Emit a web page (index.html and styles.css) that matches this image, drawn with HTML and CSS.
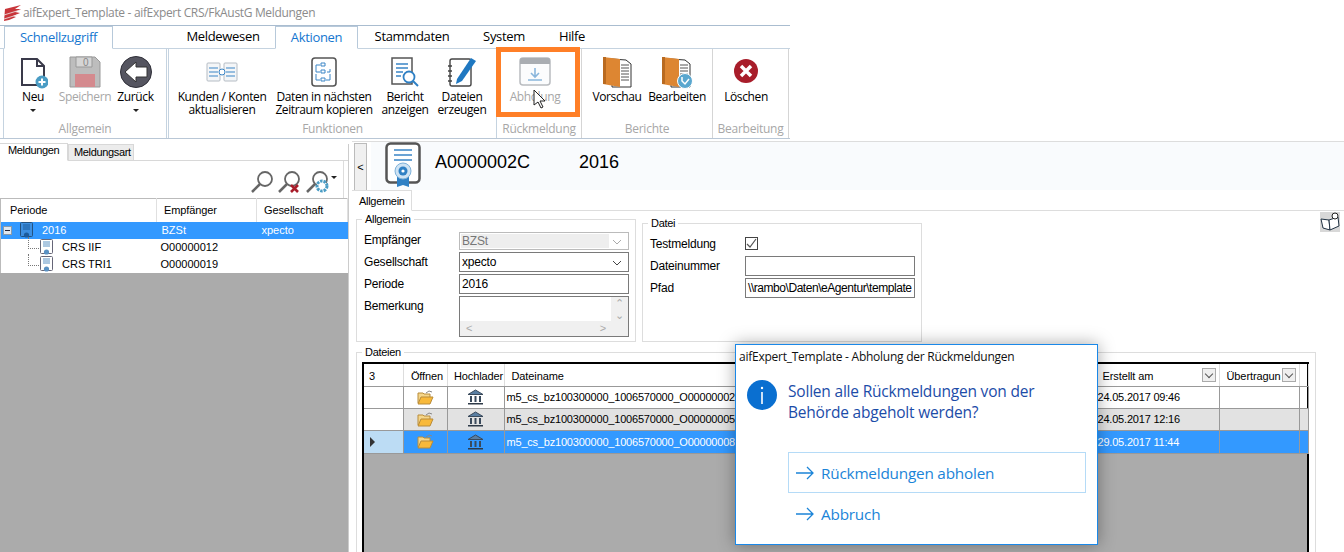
FILE: index.html
```html
<!DOCTYPE html>
<html lang="de">
<head>
<meta charset="utf-8">
<title>aifExpert CRS/FkAustG Meldungen</title>
<link rel="stylesheet" href="styles.css">
</head>
<body>
<svg class="defs" width="0" height="0">
  <symbol id="cert" viewBox="0 0 36 46">
    <rect x="1.5" y="1.5" width="33" height="39" rx="4" fill="#fff" stroke="#555" stroke-width="2.5"/>
    <path d="M9 8h18M9 13h18M9 18h18" stroke="#3a85c6" stroke-width="1.6"/>
    <path d="M12 33v12l6-2 6 2V33z" fill="#2f80c4"/>
    <circle cx="18" cy="29" r="8" fill="#cfe3f3" stroke="#7fb2da"/>
    <circle cx="18" cy="29" r="4.5" fill="#2f80c4"/>
    <circle cx="18" cy="29" r="1.6" fill="#fff"/>
  </symbol>
  <symbol id="tree" viewBox="0 0 14 17">
    <rect x=".5" y=".5" width="12" height="14" rx="1" fill="#fff" stroke="#667"/>
    <path d="M3 3h7M3 5h7M3 7h7" stroke="#5a92c4"/>
    <circle cx="6.5" cy="13" r="2.6" fill="#5a92c4"/>
  </symbol>
  <symbol id="treesel" viewBox="0 0 14 17">
    <rect x=".5" y=".5" width="12" height="14" rx="1" fill="#3d8fe0" stroke="#24527f"/>
    <path d="M3 3h7M3 5h7M3 7h7" stroke="#1d5c9c"/>
    <circle cx="6.5" cy="13" r="2.6" fill="#1d5c9c"/>
  </symbol>
  <symbol id="folder" viewBox="0 0 17 15">
    <path d="M1 3h5l1 1h6v9H1z" fill="#f5d68a" stroke="#b98c3a"/>
    <path d="M1 14l3-7h12l-3 7z" fill="#f8b93a" stroke="#b98c3a"/>
    <path d="M9 3l3-2 3 1" fill="none" stroke="#888"/>
  </symbol>
  <symbol id="bank" viewBox="0 0 17 16">
    <path d="M8.500 1L16 5.500H1z" fill="#5a7fa3" stroke="#3a4a5c"/>
    <path d="M3 7h2v6H3zM7.500 7h2v6h-2zM12 7h2v6h-2z" fill="#3a4a5c"/>
    <path d="M1 14h15v1.500H1z" fill="#2e3a48"/>
  </symbol>
  <symbol id="folderdoc" viewBox="0 0 30 32">
    <path d="M10 3l14 1 5 4v23H10z" fill="#fff" stroke="#333"/>
    <path d="M19 9h8M19 12h8M19 15h8M19 18h8M19 21h8M19 24h8" stroke="#555"/>
    <path d="M1 1l17 2v28L1 28z" fill="#dd8632"/>
    <path d="M1 1h3v27H1z" fill="#b96a20"/>
  </symbol>
</svg>

<header class="titlebar">
  <svg class="applogo" width="19" height="18" viewBox="0 0 19 18"><path d="M1 17L2 5l16-4-6 4 6 0-6 3 5 1-7 3 3 1-7 3z" fill="#c8353a"/><path d="M1 11l16-5M1 15l13-4" stroke="#eee" stroke-width=".8"/></svg>
  <span class="titletext">aifExpert_Template - aifExpert CRS/FkAustG Meldungen</span>
</header>

<section class="ribbon">
  <nav class="ribbontabs">
    <span class="rtab rtab-quick">Schnellzugriff</span>
    <span class="rtab rtab-melde">Meldewesen</span>
    <span class="rtab rtab-akt">Aktionen</span>
    <span class="rtab rtab-stamm">Stammdaten</span>
    <span class="rtab rtab-sys">System</span>
    <span class="rtab rtab-hilfe">Hilfe</span>
  </nav>
  <div class="groups">
    <div class="group g-allg">
      <div class="items">
        <div class="rbtn w-neu">
          <svg class="ico" width="30" height="32" viewBox="0 0 30 32"><path d="M4 3h15l7 7v19H4z" fill="#fff" stroke="#3a3a4a" stroke-width="2"/><path d="M19 3v7h7" fill="none" stroke="#3a3a4a" stroke-width="2"/><circle cx="24" cy="26" r="6.500" fill="#4a9cc4"/><path d="M24 22.500v7M20.500 26h7" stroke="#fff" stroke-width="2"/></svg>
          <span>Neu</span><i class="caret"></i>
        </div>
        <div class="rbtn w-spei off">
          <svg class="ico" width="32" height="32" viewBox="0 0 32 32"><path d="M1 1h25l5 5v25H1z" fill="#bdbdbd" stroke="#999"/><path d="M7 1h16v10H7z" fill="#d5d5d5" stroke="#999"/><path d="M6 18h20v13H6z" fill="#d48a8e"/><text class="savezero" x="14" y="10">0</text></svg>
          <span>Speichern</span>
        </div>
        <div class="rbtn w-zur">
          <svg class="ico" width="32" height="32" viewBox="0 0 32 32"><circle cx="16" cy="16" r="15.500" fill="#555560" stroke="#2f2f38"/><path d="M5 16l11-10v5h11v10H16v5z" fill="#fff" stroke="#333"/></svg>
          <span>Zurück</span><i class="caret"></i>
        </div>
      </div>
      <div class="caption">Allgemein</div>
    </div>
    <div class="group g-funk">
      <div class="items">
        <div class="rbtn w-kund">
          <svg class="ico" width="32" height="20" viewBox="0 0 32 20"><rect x="1" y="1" width="13" height="18" rx="1" fill="#f4f6f8" stroke="#b5bcc4"/><rect x="18" y="1" width="13" height="18" rx="1" fill="#f4f6f8" stroke="#b5bcc4"/><path d="M3 6h9M3 10h9M3 14h9M20 6h9M20 10h9M20 14h9" stroke="#3a85c6"/><circle cx="16" cy="10" r="3" fill="#fff" stroke="#3a85c6"/></svg>
          <span>Kunden / Konten<br>aktualisieren</span>
        </div>
        <div class="rbtn w-dat">
          <svg class="ico" width="26" height="30" viewBox="0 0 26 30"><rect x="1" y="1" width="24" height="28" rx="3" fill="#fff" stroke="#555" stroke-width="1.600"/><path d="M10 6h4v3h-4zM10 13h4v3h-4zM10 21h4v3h-4zM5 8h4M5 8v7h4M5 17v6h4M16 15h3v-3M19 17v6h-4" fill="none" stroke="#3a85c6"/></svg>
          <span>Daten in nächsten<br>Zeitraum kopieren</span>
        </div>
        <div class="rbtn w-ber">
          <svg class="ico" width="30" height="32" viewBox="0 0 30 32"><path d="M2 2h20v26H2z" fill="#fff" stroke="#555" stroke-width="1.500"/><path d="M6 8h12M6 12h12M6 16h7M6 20h5" stroke="#3a85c6" stroke-width="1.500"/><circle cx="19" cy="21" r="5.500" fill="#fff" stroke="#2f80c4" stroke-width="1.800"/><path d="M23 25l5 5" stroke="#2f80c4" stroke-width="2"/></svg>
          <span>Bericht<br>anzeigen</span>
        </div>
        <div class="rbtn w-dai">
          <svg class="ico" width="30" height="32" viewBox="0 0 30 32"><rect x="3" y="3" width="21" height="27" rx="2" fill="#fff" stroke="#444" stroke-width="1.400"/><path d="M1 10h4M1 15h4M1 20h4M1 25h4" stroke="#444" stroke-width="1.400"/><path d="M10 23l14-21 5 3-14 20-6 3z" fill="#1f78c1"/></svg>
          <span>Dateien<br>erzeugen</span>
        </div>
      </div>
      <div class="caption">Funktionen</div>
    </div>
    <div class="group g-ruck">
      <div class="items">
        <div class="rbtn w-abh off">
          <svg class="ico" width="32" height="30" viewBox="0 0 32 30"><rect x="1" y="1" width="30" height="27" rx="3" fill="#fbfcfd" stroke="#b9bcc0" stroke-width="1.500"/><path d="M1 3a2 2 0 012-2h26a2 2 0 012 2v4H1z" fill="#a9adb2"/><path d="M16 11v9M12 16l4 4 4-4M9 23h14" fill="none" stroke="#8ab6dc" stroke-width="1.600"/></svg>
          <span>Abholung</span>
        </div>
      </div>
      <div class="caption">Rückmeldung</div>
    </div>
    <div class="group g-ber">
      <div class="items">
        <div class="rbtn w-vor">
          <svg class="ico" width="30" height="32"><use href="#folderdoc"/></svg>
          <span>Vorschau</span>
        </div>
        <div class="rbtn w-bea">
          <svg class="ico" width="32" height="32" viewBox="0 0 32 32"><use href="#folderdoc" width="30" height="32"/><circle cx="24" cy="25" r="7.500" fill="#5aa7cf" stroke="#fff"/><path d="M21 21v4l3 3 4-5" fill="none" stroke="#fff" stroke-width="1.500"/></svg>
          <span>Bearbeiten</span>
        </div>
      </div>
      <div class="caption">Berichte</div>
    </div>
    <div class="group g-bea">
      <div class="items">
        <div class="rbtn w-los">
          <svg class="ico" width="26" height="32" viewBox="0 0 26 32"><circle cx="13" cy="15" r="12" fill="#a81d2a"/><path d="M8 10l10 10M18 10L8 20" stroke="#fff" stroke-width="3.500"/></svg>
          <span>Löschen</span>
        </div>
      </div>
      <div class="caption">Bearbeitung</div>
    </div>
  </div>
</section>

<main class="work">
  <aside class="left">
    <div class="ltabs">
      <span class="ltab ltab-on">Meldungen</span>
      <span class="ltab">Meldungsart</span>
    </div>
    <div class="ltools">
      <svg width="24" height="24" viewBox="0 0 24 24"><circle cx="15" cy="9" r="7" fill="#fff" stroke="#666" stroke-width="1.800"/><path d="M10 14l-8 8" stroke="#666" stroke-width="2.500"/></svg>
      <svg width="24" height="24" viewBox="0 0 24 24"><circle cx="14" cy="9" r="7" fill="#fff" stroke="#666" stroke-width="1.800"/><path d="M9 14l-8 8" stroke="#666" stroke-width="2.500"/><path d="M13 15l7 7M20 15l-7 7" stroke="#a81d2a" stroke-width="2.600"/></svg>
      <svg width="24" height="24" viewBox="0 0 24 24"><circle cx="14" cy="9" r="7" fill="#fff" stroke="#666" stroke-width="1.800"/><path d="M9 14l-8 8" stroke="#666" stroke-width="2.500"/><circle cx="16" cy="16" r="5" fill="#fff" stroke="#4a9cc4" stroke-width="3" stroke-dasharray="2.500 1"/></svg>
      <i class="caret caret-tool"></i>
    </div>
    <table class="treegrid">
      <thead><tr><th class="tc1">Periode</th><th class="tc2">Empfänger</th><th class="tc3">Gesellschaft</th></tr></thead>
      <tbody>
        <tr class="sel">
          <td><i class="minus"></i><svg class="tico" width="14" height="17"><use href="#treesel"/></svg><span class="t0">2016</span></td>
          <td>BZSt</td><td>xpecto</td>
        </tr>
        <tr><td class="child"><svg class="tico" width="14" height="17"><use href="#tree"/></svg><span class="t1">CRS IIF</span></td><td>O00000012</td><td></td></tr>
        <tr><td class="child"><svg class="tico" width="14" height="17"><use href="#tree"/></svg><span class="t1">CRS TRI1</span></td><td>O00000019</td><td></td></tr>
      </tbody>
    </table>
    <div class="grayfill"></div>
  </aside>

  <section class="right">
    <div class="head">
      <button class="collapse">&lt;</button>
      <div class="headband">
        <svg width="36" height="46"><use href="#cert"/></svg>
        <span class="h-id">A0000002C</span>
        <span class="h-yr">2016</span>
      </div>
    </div>
    <div class="rtabs"><span class="itab">Allgemein</span>
      <svg class="helpico" width="20" height="20" viewBox="0 0 20 20"><rect width="20" height="20" fill="#d8d8d8"/><path d="M1 7l8 1 1 10-7-2z" fill="#fff" stroke="#234"/><path d="M9 8l9-3 1 9-9 4z" fill="#fff" stroke="#234"/><circle cx="15" cy="4" r="3" fill="#fff" stroke="#222"/></svg>
    </div>
    <div class="forms">
      <fieldset class="fs fs-a">
        <legend>Allgemein</legend>
        <div class="frow frow-first"><label>Empfänger</label><div class="field dis"><span class="disv">BZSt</span><svg class="chev" width="10" height="6" viewBox="0 0 10 6"><path d="M1 1l4 4 4-4" fill="none" stroke="#aaa"/></svg></div></div>
        <div class="frow"><label>Gesellschaft</label><div class="field">xpecto<svg class="chev" width="10" height="6" viewBox="0 0 10 6"><path d="M1 1l4 4 4-4" fill="none" stroke="#444"/></svg></div></div>
        <div class="frow"><label>Periode</label><div class="field">2016</div></div>
        <div class="frow frow-memo"><label>Bemerkung</label>
          <div class="field memo">
            <div class="memobody"><div class="memotext"></div><div class="vbar"><b>&#8963;</b><b class="down">&#8964;</b></div></div>
            <div class="hbar"><b>&lt;</b><b>&gt;</b></div>
          </div>
        </div>
      </fieldset>
      <fieldset class="fs fs-d">
        <legend>Datei</legend>
        <div class="frow frow-chk"><label>Testmeldung</label><span class="chk"><svg width="11" height="11" viewBox="0 0 11 11"><path d="M1 6l3 3 6-8" fill="none" stroke="#555" stroke-width="1.200"/></svg></span></div>
        <div class="frow"><label>Dateinummer</label><div class="field"></div></div>
        <div class="frow"><label>Pfad</label><div class="field clip">\\rambo\Daten\eAgentur\template</div></div>
      </fieldset>
    </div>
    <fieldset class="fs fs-f">
      <legend>Dateien</legend>
      <div class="gridwrap">
        <table class="files">
          <colgroup><col class="c0"><col class="c1"><col class="c2"><col class="c3"><col class="c4"><col class="c5"><col class="c6"></colgroup>
          <thead><tr>
            <th class="ct">3</th><th class="ctr h-off">Öffnen</th><th class="ctr h-hoch">Hochlader</th><th class="hn">Dateiname</th>
            <th class="hn">Erstellt am<i class="fbtn"></i></th><th class="hu">Übertragun<i class="fbtn"></i></th><th></th>
          </tr></thead>
          <tbody>
            <tr><td></td><td class="ctr"><svg width="17" height="15"><use href="#folder"/></svg></td><td class="ctr"><svg width="17" height="16"><use href="#bank"/></svg></td><td>m5_cs_bz100300000_1006570000_O00000002</td><td>24.05.2017 09:46</td><td></td><td></td></tr>
            <tr class="alt"><td class="wh"></td><td class="ctr"><svg width="17" height="15"><use href="#folder"/></svg></td><td class="ctr"><svg width="17" height="16"><use href="#bank"/></svg></td><td>m5_cs_bz100300000_1006570000_O00000005</td><td>24.05.2017 12:16</td><td></td><td></td></tr>
            <tr class="cur"><td class="rowh"><i class="rowarrow"></i></td><td class="ctr"><svg width="17" height="15"><use href="#folder"/></svg></td><td class="ctr"><svg width="17" height="16"><use href="#bank"/></svg></td><td>m5_cs_bz100300000_1006570000_O00000008</td><td>29.05.2017 11:44</td><td></td><td></td></tr>
          </tbody>
        </table>
        <div class="gridgray"></div>
      </div>
    </fieldset>
  </section>
</main>

<div class="orange"></div>
<svg class="cursor" width="14" height="20" viewBox="0 0 14 20"><path d="M1 1v15l4-3 3 6 2-1-3-6h5z" fill="#fff" stroke="#222"/></svg>

<div class="dialog">
  <div class="dtitle">aifExpert_Template - Abholung der Rückmeldungen</div>
  <div class="dmain">
    <svg class="dinfo" width="30" height="30" viewBox="0 0 30 30"><circle cx="15" cy="15" r="15" fill="#0a6fd0"/><path d="M15 12v12" stroke="#fff" stroke-width="1.600"/><circle cx="15" cy="8" r="1.200" fill="#fff"/></svg>
    <p class="dq">Sollen alle Rückmeldungen von der<br>Behörde abgeholt werden?</p>
  </div>
  <div class="dbtn dbtn-first">
    <svg width="18" height="14" viewBox="0 0 18 14"><path d="M0 7h17M11 1l6 6-6 6" fill="none" stroke="#1b84d8" stroke-width="1.300"/></svg>
    <span>Rückmeldungen abholen</span>
  </div>
  <div class="dbtn">
    <svg width="18" height="14" viewBox="0 0 18 14"><path d="M0 7h17M11 1l6 6-6 6" fill="none" stroke="#1b84d8" stroke-width="1.300"/></svg>
    <span>Abbruch</span>
  </div>
</div>
</body>
</html>
```
FILE: styles.css
```css
* { box-sizing: border-box; }
html, body { margin: 0; padding: 0; }
body {
  width: 1344px; height: 552px; overflow: hidden; position: relative;
  background: #fff; color: #000;
  font: 12px/14px "Open Sans", "Noto Sans", sans-serif;
}
.defs { position: absolute; }
i { display: block; font-style: normal; }

.titlebar { height: 25px; display: flex; align-items: center; padding-left: 3px; background: #fff; }
.applogo { margin-right: 1px; }
.titletext { color: #8b8b8b; font-size: 12px; letter-spacing: -.33px; }

.ribbon { width: 790px; height: 114px; border-top: 1px solid #aabdd0; border-bottom: 1px solid #b9c7d6; background: #fff; }
.ribbontabs { height: 23px; display: flex; align-items: flex-end; padding-left: 4px; border-bottom: 1px solid #c5d3e0; }
.rtab { font-size: 13px; height: 23px; line-height: 21px; letter-spacing: -.33px; text-align: center; margin-bottom: -1px; }
.rtab-quick, .rtab-akt { color: #1476cf; background: #fff; border: 1px solid #b7c9da; border-bottom: 1px solid #fff; }
.rtab-quick { width: 109px; margin-right: 58px; }
.rtab-melde { width: 104px; }
.rtab-akt { width: 83px; }
.rtab-stamm { width: 108px; }
.rtab-sys { width: 66px; margin-left: 5px; }
.rtab-hilfe { width: 84px; margin-left: -7px; }

.groups { display: flex; height: 89px; padding-left: 3px; }
.group { display: flex; flex-direction: column; border-right: 1px solid #c5d3e0; }
.g-allg { width: 164px; border-left: 1px solid #c5d3e0; margin-right: 1px; }
.g-funk { width: 329px; border-left: 1px solid #c5d3e0; }
.g-ruck { width: 85px; border-right-color: #d5d5d5; }
.g-ber { width: 131px; border-right-color: #d5d5d5; }
.g-bea { width: 76px; border-right-color: #d5d5d5; }
.items { flex: 1; display: flex; padding-top: 6px; }
.caption { height: 20px; padding-top: 3px; text-align: center; color: #a7a7a7; letter-spacing: -.25px; line-height: 16px; }
.rbtn { display: flex; flex-direction: column; align-items: center; text-align: center; line-height: 13px; font-size: 12px; letter-spacing: -.38px; white-space: nowrap; }
.rbtn .ico { height: 34px; margin-bottom: 1px; flex: none; }
.rbtn.off { color: #a7a7a7; }
.savezero { font: 10px "Liberation Sans", sans-serif; fill: #888; }
.caret { width: 0; height: 0; border: 3px solid transparent; border-top: 3px solid #222; border-bottom: 0; margin-top: 6px; }
.w-neu { width: 58px; }
.w-spei { width: 50px; margin-left: -2px; }
.w-zur { width: 55px; margin-left: -2px; }
.w-kund { width: 110px; margin-left: -2px; }
.w-dat { width: 100px; margin-left: -3px; }
.w-ber { width: 50px; margin-left: 6px; }
.w-dai { width: 60px; margin-left: 2px; }
.w-abh { width: 84px; margin-left: -4px; }
.w-vor { width: 60px; margin-left: 5px; }
.w-bea { width: 60px; }
.w-los { width: 74px; margin-left: -4px; }

.work { display: flex; height: 414px; }
.left { width: 349px; display: flex; flex-direction: column; margin-top: 5px; border-right: 1px solid #ccc; }
.ltabs { height: 17px; display: flex; align-items: flex-end; border-bottom: 1px solid #d8d8d8; flex: none; }
.ltab { font-family: "Liberation Sans", sans-serif; font-size: 11px; letter-spacing: -.35px; height: 16px; padding: 1px 5px 0; background: #ececec; border: 1px solid #d8d8d8; border-bottom: 0; width: 66px; line-height: 13px; }
.ltab-on { background: #fff; height: 18px; width: 68px; margin-bottom: -1px; padding: 0 0 0 8px; border-left: 0; border-bottom: 1px solid #fff; }
.ltools { height: 37px; flex: none; display: flex; justify-content: flex-end; align-items: center; gap: 4px; padding-right: 6px; padding-top: 4px; border-right: 1px solid #ddd; margin-right: 4px; }
.caret-tool { margin: -8px 0 0 -3px; }

.treegrid { width: 348px; border-collapse: collapse; table-layout: fixed; font-family: "Liberation Sans", sans-serif; font-size: 11px; flex: none; border-top: 1px solid #bbb; border-left: 1px solid #bbb; }
.treegrid th { height: 23px; font-weight: 400; text-align: left; padding: 0 0 0 7px; border-right: 1px solid #e0e0e0; letter-spacing: -.1px; }
.treegrid th.tc1 { padding-left: 9px; }
.tc1 { width: 156px; }
.tc2 { width: 100px; }
.treegrid td { height: 17px; padding: 0 0 0 5px; white-space: nowrap; position: relative; }
.treegrid tbody tr:not(.sel) td + td { padding-left: 4px; }
.sel td { background: #3399ff; color: #fff; }
.minus { position: absolute; left: 2px; top: 4px; width: 9px; height: 9px; background: #dfe7ef; border: 1px solid #8a9aaa; }
.minus::after { content: ""; position: absolute; left: 1px; right: 1px; top: 3px; height: 1px; background: #223; }
.tico { position: absolute; left: 19px; top: 0; }
.child .tico { left: 39px; }
.child::before { content: ""; position: absolute; left: 27px; top: -2px; width: 12px; height: 11px; border-left: 1px dotted #777; border-bottom: 1px dotted #777; }
.t0 { margin-left: 36px; }
.t1 { margin-left: 56px; }
.grayfill { flex: 1; background: #ababab; }

.right { flex: 1; margin-left: 3px; }
.head { height: 50px; display: flex; margin-top: 2px; border-top: 1px solid #ddd; }
.collapse { width: 13px; height: 48px; padding: 0; font: 11px "Liberation Sans", sans-serif; color: #000; background: #f0f0f0; border: 1px solid #bbb; margin: 1px 0 0 2px; }
.headband { flex: 1; height: 48px; margin-left: 4px; background: #f9fbfd; display: flex; align-items: flex-start; padding-left: 14px; font: 18px/40px "Liberation Sans", sans-serif; overflow: hidden; }
.h-id { margin-left: 14px; width: 144px; }
.rtabs { height: 21px; border-bottom: 1px solid #ddd; position: relative; margin-top: -1px; }
.itab { display: block; width: 60px; height: 21px; padding: 3px 0 0 7px; border: 1px solid #ddd; border-left: 0; border-bottom: 1px solid #fff; font: 11px/14px "Liberation Sans", sans-serif; letter-spacing: -.3px; background: #fff; }
.helpico { position: absolute; right: 4px; top: 22px; }

.fs { margin: 0; padding: 0; border: 1px solid #ddd; font: 12px/14px "Liberation Sans", sans-serif; letter-spacing: -.2px; min-width: 0; }
.fs legend { padding: 0 3px; margin-left: -2px; line-height: 12px; font-size: 11px; letter-spacing: -.3px; }
.forms { display: flex; align-items: flex-start; gap: 6px; padding: 2px 0 0 4px; height: 132px; }
.fs-a { width: 280px; height: 129px; padding: 7px 6px 0 7px; }
.fs-d { width: 280px; height: 125px; margin-top: 4px; padding: 7px 6px 0 7px; }
.fs-f { width: 960px; height: 210px; margin: 3px 0 0 4px; padding: 0 6px 0 5px; }
.fs-f legend { margin-left: 0; }
.frow { display: flex; height: 22px; }
.frow label { width: 95px; padding-top: 3px; }
.frow-first { height: 20px; }
.frow-first label { padding-top: 1px; }
.frow-first .field { height: 18px; }
.frow-first .chev { top: 6px; }
.frow-chk { height: 20px; }
.frow-chk label { padding-top: 1px; }
.frow-memo { height: 42px; }
.field { width: 170px; height: 20px; border: 1px solid #7a7a7a; padding: 2px 2px; position: relative; background: #fff; white-space: nowrap; }
.clip { overflow: hidden; letter-spacing: -.45px; }
.dis { border-color: #bbb; padding: 1px; color: #777; }
.disv { display: block; width: 148px; height: 14px; background: #eee; padding: 0 1px; }
.chev { position: absolute; right: 6px; top: 7px; }
.memo { height: 41px; padding: 0; display: flex; flex-direction: column; }
.memobody { flex: 1; display: flex; }
.memotext { flex: 1; }
.vbar { width: 17px; background: #f0f0f0; display: flex; flex-direction: column; align-items: center; color: #aaa; font: 11px/9px "DejaVu Sans", sans-serif; }
.vbar b { font-weight: 400; height: 12px; padding-top: 2px; }
.hbar { height: 16px; background: #f0f0f0; display: flex; justify-content: space-between; padding: 0 22px 0 6px; color: #aaa; font: 11px/15px "Liberation Sans", sans-serif; }
.hbar b { font-weight: 400; }
.chk { width: 13px; height: 13px; border: 1px solid #444; display: flex; align-items: center; justify-content: center; margin: 1px 0 0; }

.gridwrap { height: 190px; margin-top: 4px; border: 2px solid #000; border-bottom: 0; display: flex; flex-direction: column; }
.files { width: 944px; border-collapse: collapse; table-layout: fixed; font: 11px "Liberation Sans", sans-serif; flex: none; }
.c0 { width: 39px; } .c1 { width: 44px; } .c2 { width: 57px; } .c3 { width: 591px; } .c4 { width: 124px; } .c5 { width: 80px; } .c6 { width: 9px; }
.files th { height: 22px; font-weight: 400; text-align: left; position: relative; border-right: 1px solid #ddd; border-bottom: 1px solid #999; padding: 3px 0 0; overflow: hidden; white-space: nowrap; letter-spacing: -.1px; }
.files td { height: 22px; padding: 0 0 0 2px; border-right: 1px solid #999; border-bottom: 1px solid #999; overflow: hidden; white-space: nowrap; }
.files th.ct { padding-left: 5px; }
.files th.hn { padding-left: 7px; }
.files th.hu { padding-left: 7px; }
.files .ctr { text-align: center; padding: 0; }
.files th.ctr { padding-top: 3px; }
.files th.h-off { padding-left: 4px; }
.files th.h-hoch { padding-left: 6px; }
.files svg { display: inline-block; vertical-align: middle; }
.alt td { background: #e2e2e2; }
.alt .wh { background: #fff; }
.cur td { background: #3399ff; color: #fff; height: 23px; }
.cur .rowh { background: #bcdcf4; }
.rowarrow { width: 0; height: 0; border: 5px solid transparent; border-left: 5px solid #333; margin-left: 4px; }
.fbtn { position: absolute; right: 3px; top: 4px; width: 14px; height: 14px; background: #efefef; border: 1px solid #aaa; }
.fbtn::after { content: ""; position: absolute; left: 3px; top: 2px; width: 5px; height: 5px; border-right: 1px solid #555; border-bottom: 1px solid #555; transform: rotate(45deg); }
.gridgray { flex: 1; background: #ababab; }

.orange { position: absolute; left: 496px; top: 47px; width: 84px; height: 70px; border: 5px solid #ff7f27; }
.cursor { position: absolute; left: 533px; top: 89px; }

.dialog { position: absolute; left: 735px; top: 344px; width: 363px; height: 201px; background: #fff; border: 1px solid #1a88e8; box-shadow: 0 0 16px rgba(0,0,0,.35); }
.dtitle { font-size: 12px; line-height: 14px; padding: 5px 0 0 3px; letter-spacing: -.25px; color: #111; }
.dmain { display: flex; padding: 12px 0 0 11px; }
.dinfo { flex: none; margin-top: 4px; }
.dq { margin: 5px 0 0 11px; color: #1c4ca8; font-size: 15.500px; line-height: 21px; letter-spacing: -.2px; }
.dbtn { width: 298px; height: 41px; margin-left: 52px; display: flex; align-items: center; gap: 7px; padding-left: 7px; color: #1b84d8; font-size: 15.300px; letter-spacing: -.2px; border: 1px solid transparent; }
.dbtn-first { margin-top: 29px; border-color: #b5dbf7; }
```
